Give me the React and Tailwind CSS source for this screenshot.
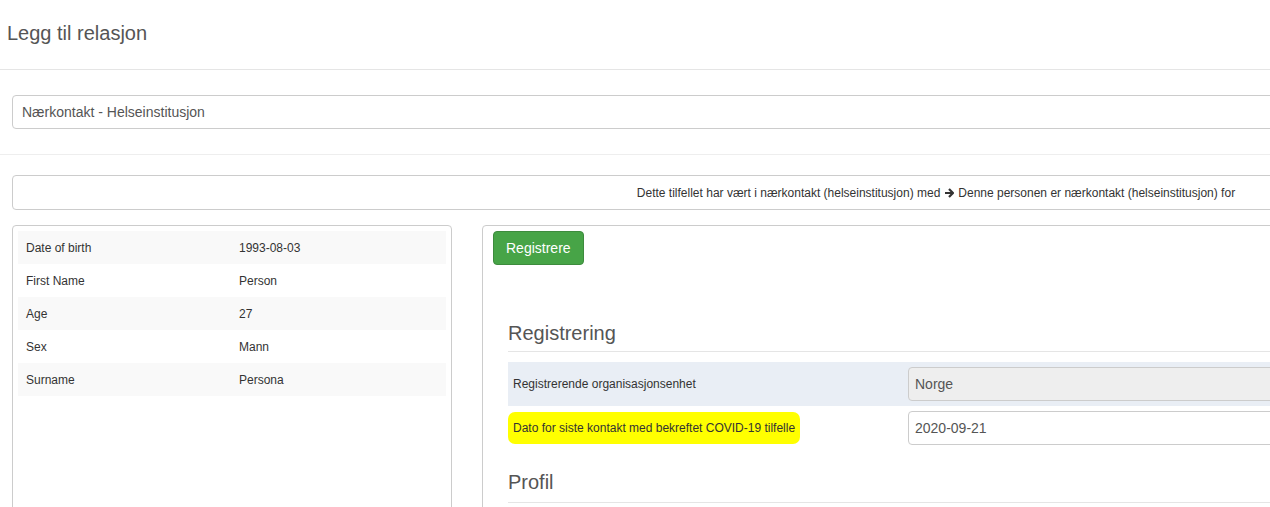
import React from "react";

const rows = [
  ["Date of birth", "1993-08-03"],
  ["First Name", "Person"],
  ["Age", "27"],
  ["Sex", "Mann"],
  ["Surname", "Persona"],
];

export default function App() {
  return (
    <div className="w-[1270px] h-[507px] overflow-hidden bg-white text-[#333] font-['Liberation_Sans',Arial,sans-serif]">
      <div className="w-[1900px]">
        <div className="h-[69px] flex items-center pl-[7px]">
          <h1 className="text-[20px] text-[#555] leading-none pb-[3px]">Legg til relasjon</h1>
        </div>
        <div className="h-px bg-[#e5e5e5]" />
        <div className="px-[12px] pt-[25px] pb-[25px]">
          <div className="h-[34px] border border-[#ccc] rounded-[4px] flex items-center pl-[9px] text-[14px] text-[#555] w-[1860px]">
            Nærkontakt - Helseinstitusjon
          </div>
        </div>
        <div className="h-px bg-[#eee]" />
        <div className="px-[12px] pt-[20px]">
          <div className="h-[35px] border border-[#ccc] rounded-[4px] flex items-center justify-center text-[12px] text-[#333] w-[1848px]">
            <span>Dette tilfellet har vært i nærkontakt (helseinstitusjon) med</span>
            <svg className="mx-[4px]" width="10" height="10" viewBox="0 0 10 10">
              <path d="M5 1 L9 5 L5 9 M1 5 H8.5" stroke="#333" strokeWidth="2.2" fill="none" strokeLinejoin="miter" />
            </svg>
            <span>Denne personen er nærkontakt (helseinstitusjon) for</span>
          </div>
        </div>
        <div className="flex pl-[12px] pt-[15px] gap-[30px]">
          <div className="w-[440px] h-[300px] border border-[#ccc] rounded-[4px] p-[5px] shrink-0">
            {rows.map(([k, v], i) => (
              <div
                key={k}
                className={`h-[33px] flex items-center text-[12px] text-[#333] ${i % 2 === 0 ? "bg-[#f9f9f9]" : "bg-white"}`}
              >
                <div className="w-[221px] pl-[8px]">{k}</div>
                <div>{v}</div>
              </div>
            ))}
          </div>
          <div className="w-[1200px] h-[300px] border border-[#ccc] rounded-[4px] pl-[10px] pt-[5px] shrink-0">
            <button className="h-[34px] px-[12px] bg-[#47a447] border border-[#3d8b3d] rounded-[4px] text-white text-[14px]">
              Registrere
            </button>
            <div className="pl-[15px] pr-[10px]">
              <div className="pt-[56px] pb-[6px] border-b border-[#e5e5e5]">
                <h2 className="text-[20px] text-[#555] leading-[24px]">Registrering</h2>
              </div>
              <div className="mt-[10px] h-[44px] bg-[#e9eef5] flex items-center">
                <div className="w-[400px] pl-[5px] text-[12px] text-[#333]">Registrerende organisasjonsenhet</div>
                <div className="flex-1 h-[34px] bg-[#eee] border border-[#ccc] rounded-[4px] flex items-center pl-[6px] text-[14px] text-[#555]">
                  Norge
                </div>
              </div>
              <div className="h-[44px] flex items-center">
                <div className="w-[400px] text-[12px] text-[#333]">
                  <span className="bg-[#ffff00] px-[5px] py-[9px] rounded-[7px]">Dato for siste kontakt med bekreftet COVID-19 tilfelle</span>
                </div>
                <div className="flex-1 h-[34px] bg-white border border-[#ccc] rounded-[4px] flex items-center pl-[6px] text-[14px] text-[#555]">
                  2020-09-21
                </div>
              </div>
              <div className="pt-[20px] pb-[8px] border-b border-[#e5e5e5]">
                <h2 className="text-[20px] text-[#555] leading-[24px]">Profil</h2>
              </div>
            </div>
          </div>
        </div>
      </div>
    </div>
  );
}
